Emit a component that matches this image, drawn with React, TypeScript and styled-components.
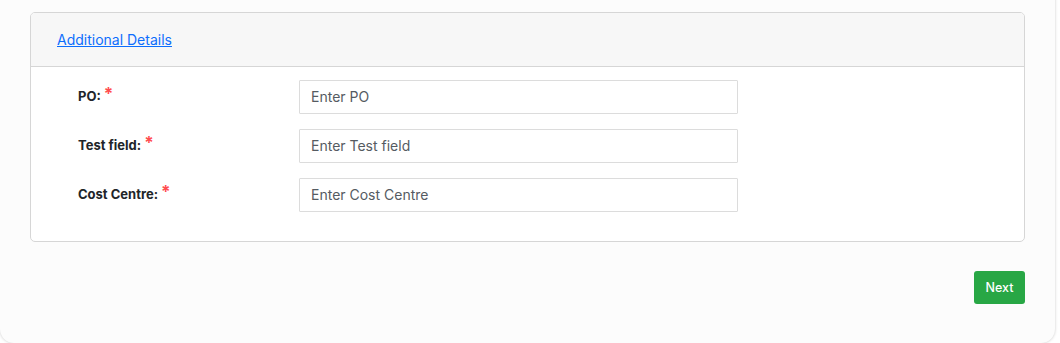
import React from "react";
import styled, { createGlobalStyle } from "styled-components";

const Global = createGlobalStyle`
  html, body { margin: 0; padding: 0; background: #ffffff; }
  body { font-family: Inter, "Open Sans", "Liberation Sans", sans-serif; color: #212529; }
  * { box-sizing: border-box; }
`;

const Panel = styled.div`
  width: 1055px;
  height: 363px;
  margin-top: -20px;
  padding: 32px 30px 0 30px;
  background: #fcfcfc;
  border-radius: 0 0 14px 14px;
  box-shadow: 0 0 3px rgba(0, 0, 0, 0.22);
  display: flex;
  flex-direction: column;
`;

const Card = styled.section`
  border: 1px solid #d6d6d6;
  border-radius: 5px;
  background: #ffffff;
  overflow: hidden;
`;

const CardHeader = styled.header`
  height: 54px;
  background: #f7f7f7;
  border-bottom: 1px solid #d6d6d6;
  display: flex;
  align-items: center;
  padding: 0 26px;
`;

const HeaderLink = styled.a`
  color: #0d6efd;
  font-size: 14px;
  text-decoration: underline;
  cursor: pointer;
`;

const CardBody = styled.div`
  padding: 13px 0 29px 47px;
  display: flex;
  flex-direction: column;
  gap: 15px;
`;

const Row = styled.div`
  display: grid;
  grid-template-columns: 221px 439px;
  align-items: start;
`;

const Label = styled.label`
  font-size: 13px;
  line-height: 16px;
  font-weight: 700;
  color: #212529;
  padding-top: 8px;
  display: flex;
  align-items: flex-start;
  gap: 3px;
`;

const Star = styled.span`
  color: #ff4d4f;
  font-size: 17px;
  font-weight: 700;
  line-height: 1;
  margin-top: -2px;
`;

const Input = styled.input`
  height: 34px;
  width: 439px;
  border: 1px solid #dcdcdc;
  border-radius: 1px;
  background: #ffffff;
  padding: 0 11px 2px;
  font-family: inherit;
  font-size: 14px;
  color: #212529;
  outline: none;
  &::placeholder { color: #555b62; }
`;

const Footer = styled.div`
  display: flex;
  justify-content: flex-end;
  padding-top: 29px;
`;

const NextButton = styled.button`
  width: 51px;
  height: 33px;
  background: #28a745;
  border: none;
  border-radius: 3px;
  color: #ffffff;
  font-family: inherit;
  font-size: 12.5px;
  font-weight: 500;
  cursor: pointer;
`;

const fields = [
  { label: "PO:", placeholder: "Enter PO" },
  { label: "Test field:", placeholder: "Enter Test field" },
  { label: "Cost Centre:", placeholder: "Enter Cost Centre" },
];

export default function App() {
  return (
    <>
      <Global />
      <Panel>
        <Card>
          <CardHeader>
            <HeaderLink>Additional Details</HeaderLink>
          </CardHeader>
          <CardBody>
            {fields.map((f) => (
              <Row key={f.label}>
                <Label>
                  {f.label}
                  <Star>*</Star>
                </Label>
                <Input placeholder={f.placeholder} />
              </Row>
            ))}
          </CardBody>
        </Card>
        <Footer>
          <NextButton>Next</NextButton>
        </Footer>
      </Panel>
    </>
  );
}
